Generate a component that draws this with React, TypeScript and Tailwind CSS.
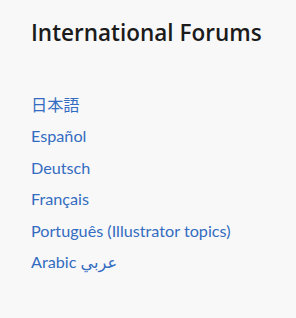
const forums = [
  "日本語",
  "Español",
  "Deutsch",
  "Français",
  "Português (Illustrator topics)",
  "Arabic عربي",
];

export default function App() {
  return (
    <div className="w-[296px] h-[318px] bg-[#f8f8f9] font-['Lato','Noto_Sans_CJK_JP','DejaVu_Sans',sans-serif]">
      <div className="px-[31px] pt-[18px]">
        <h2 className="font-['Open_Sans',sans-serif] text-[22.5px] leading-[30px] font-semibold text-[#1b1b1b]">
          International Forums
        </h2>
        <ul className="mt-[47px] flex flex-col">
          {forums.map((f) => (
            <li key={f} className="h-[31.4px] leading-[20px]">
              <a href="#" className="text-[16.2px] text-[#336cc0]">
                {f}
              </a>
            </li>
          ))}
        </ul>
      </div>
    </div>
  );
}
